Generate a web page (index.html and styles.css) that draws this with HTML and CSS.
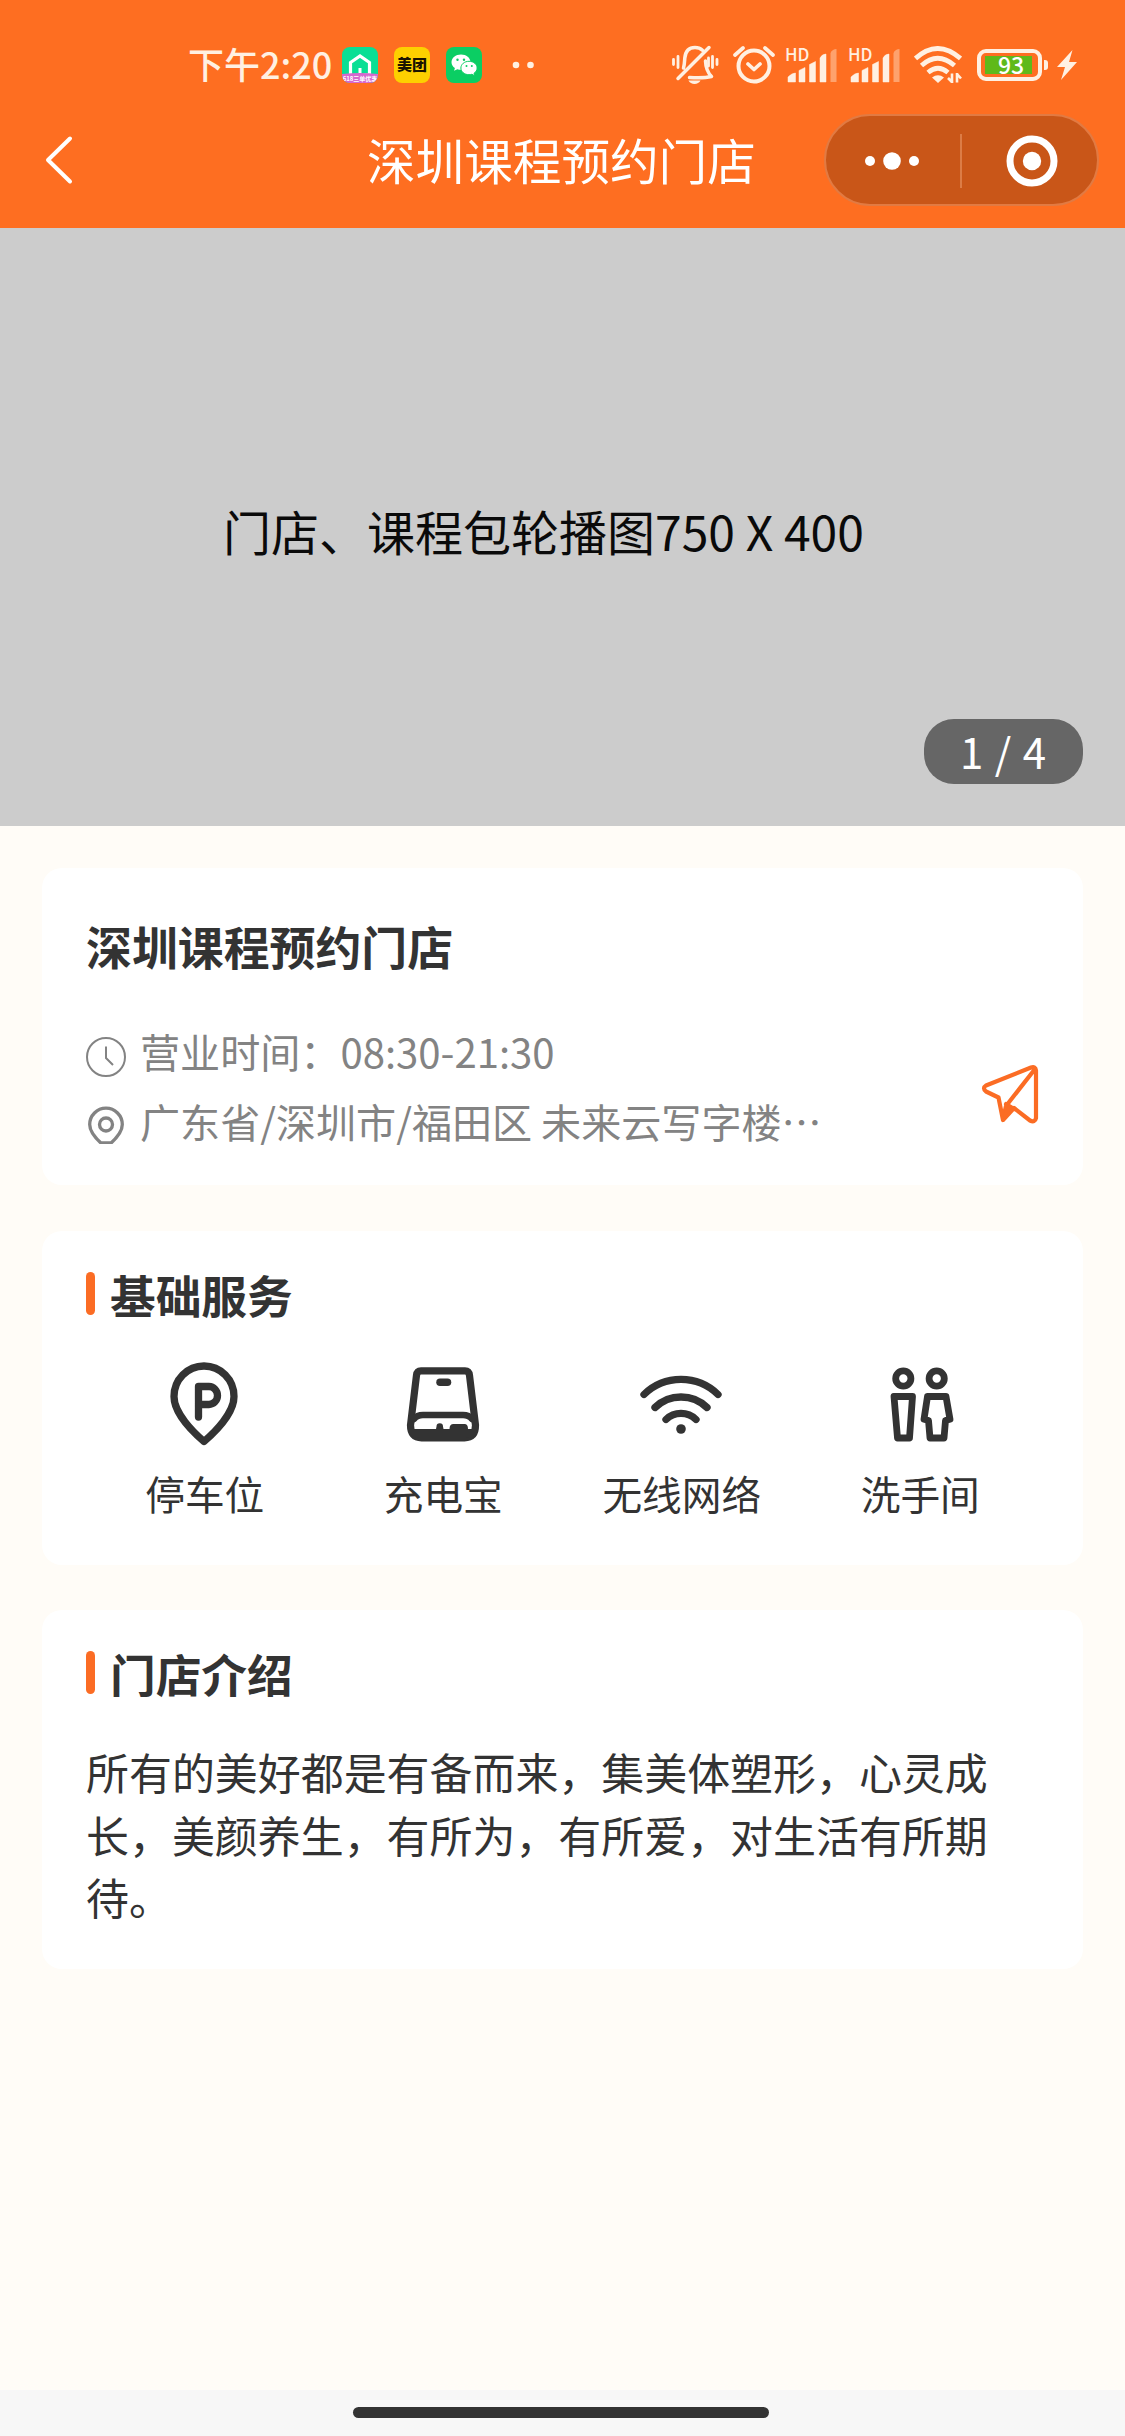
FILE: index.html
```html
<!DOCTYPE html>
<html lang="zh-CN">
<head>
<meta charset="utf-8">
<title>深圳课程预约门店</title>
<link rel="stylesheet" href="styles.css">
</head>
<body>
<div class="page">
  <header class="header">
    <div class="status">
      <div class="status-left">
        <span class="time">下午2:20</span>
        <svg class="app" width="36" height="36" viewBox="0 0 36 36">
          <defs><clipPath id="app-clip"><rect width="36" height="36" rx="8"/></clipPath></defs>
          <g clip-path="url(#app-clip)">
            <rect width="36" height="36" fill="#08df94"/>
            <path d="M8.500 28V15.500L18 9l9.500 6.500V28h-6" fill="none" stroke="#fff" stroke-width="3.200"/>
            <path d="M18 21v6" stroke="#fff" stroke-width="3"/>
            <path d="M0 27q18-2 36 0v9H0z" fill="#d768cf"/>
            <text x="18" y="34" class="app-promo" text-anchor="middle">618三单优惠</text>
          </g>
        </svg>
        <span class="app app-meituan">美团</span>
        <svg class="app" width="36" height="36" viewBox="0 0 36 36">
          <rect width="36" height="36" rx="8" fill="#0bce63"/>
          <path d="M15 7.500c-5.300 0-9.500 3.400-9.500 7.700 0 2.400 1.300 4.500 3.400 5.900l-.8 2.700 3.200-1.500c1.200.4 2.400.5 3.700.5 5.300 0 9.500-3.300 9.500-7.600S20.300 7.500 15 7.500z" fill="#fff"/>
          <path d="M23 14.300c-4.600 0-8.100 3-8.100 6.700s3.500 6.700 8.100 6.700c1 0 2-.2 2.900-.4l2.800 1.500-.7-2.500c1.900-1.200 3.100-3.100 3.100-5.300 0-3.700-3.500-6.700-8.100-6.700z" fill="#fff" stroke="#0bce63"/>
          <g fill="#0bce63"><circle cx="11.500" cy="12.700" r="1.200"/><circle cx="18" cy="12.700" r="1.200"/><circle cx="20.500" cy="19" r="1"/><circle cx="25.800" cy="19" r="1"/></g>
        </svg>
        <svg class="more" width="22" height="8" viewBox="0 0 22 8" fill="#fff0e2"><circle cx="4" cy="4" r="3.300"/><circle cx="18.500" cy="4" r="3.300"/></svg>
      </div>
      <div class="status-right">
        <svg width="48" height="40" viewBox="0 0 48 40" fill="none" stroke="#fff0e2" stroke-linecap="round" stroke-linejoin="round">
          <path d="M2.500 14.500v5M7 11.500v11M41.500 11.500v11M46 14.500v5M37.500 13v8" stroke-width="2.800"/>
          <path d="M12.500 23c1-3 1-6 1.300-10C14.500 6 18 2.500 24 2.500c3 0 5.500 1 7.500 2.800M38 2.500L7 33.500M34.500 16c.3 8 2 11.500 6 15.500-6 1.500-14 1.500-22 1" stroke-width="3.500"/>
          <path d="M17.500 35.500h12c-2 4.500-10 4.500-12 0z" fill="#fff0e2" stroke="none"/>
        </svg>
        <svg class="alarm" width="42" height="40" viewBox="0 0 42 40" fill="none" stroke="#fff0e2" stroke-linecap="round" stroke-linejoin="round">
          <circle cx="21" cy="21" r="15.500" stroke-width="4"/>
          <path d="M2 10l8-7M40 10l-8-7M15 19l6 5.500 6-5.500" stroke-width="3.700"/>
        </svg>
        <svg class="signal" width="52" height="36" viewBox="0 0 52 36" fill="#fff0e2">
          <text x="-1" y="13.500" class="hd">HD</text>
          <path d="M2 35v-5q4-4 7.500-4v9zM13 35V23.500l6-3V35zM23.500 35V17.500l6-3V35zM34 35V11q2-4 6-4v28z" stroke="#fff0e2" stroke-width=".5" stroke-linejoin="round"/>
          <path d="M44.500 35V6q2-4 6-4v33z" opacity=".4"/>
        </svg>
        <svg class="signal" width="52" height="36" viewBox="0 0 52 36" fill="#fff0e2">
          <text x="-1" y="13.500" class="hd">HD</text>
          <path d="M2 35v-5q4-4 7.500-4v9zM13 35V23.500l6-3V35zM23.500 35V17.500l6-3V35zM34 35V11q2-4 6-4v28z" stroke="#fff0e2" stroke-width=".5" stroke-linejoin="round"/>
          <path d="M44.500 35V6q2-4 6-4v33z" opacity=".4"/>
        </svg>
        <svg class="wifi-status" width="48" height="38" viewBox="0 0 48 38" fill="none" stroke="#fff0e2" stroke-width="4.800">
          <path d="M1.500 12.500q22-20 45 0M7.500 19.500q16-14.500 33 0M14 26.500q10-8.500 20 0"/>
          <path d="M18 31.500q6-4.500 12 0l-6 5.500z" fill="#fff0e2" stroke="none"/>
          <path d="M38 37V27.500M38 36l-4-4M43 27v9.500M43 28l4 4.500" stroke-width="2.600"/>
        </svg>
        <div class="battery"><span class="battery-level">93</span></div>
        <svg class="bolt" width="20" height="30" viewBox="0 0 20 30" fill="#fff0e2"><path d="M15.500 0L0 17h8L4 30 20 12h-8z"/></svg>
      </div>
    </div>
    <div class="nav">
      <svg class="back" width="30" height="52" viewBox="0 0 30 52" fill="none" stroke="#fff" stroke-width="4" stroke-linecap="round" stroke-linejoin="round"><path d="M26 4.500L4 26l22 21.500"/></svg>
      <h1 class="nav-title">深圳课程预约门店</h1>
      <div class="capsule">
        <svg class="dots" width="56" height="20" viewBox="0 0 56 20" fill="#fff"><circle cx="6" cy="10" r="5"/><circle cx="28" cy="10" r="8.800"/><circle cx="50" cy="10" r="5"/></svg>
        <span class="capsule-line"></span>
        <svg class="target" width="52" height="52" viewBox="0 0 52 52"><circle cx="26" cy="26" r="22" fill="none" stroke="#fff" stroke-width="7"/><circle cx="26" cy="26" r="9.200" fill="#fff"/></svg>
      </div>
    </div>
  </header>

  <section class="hero">
    <span class="hero-text">门店、课程包轮播图750 X 400</span>
    <span class="counter">1 / 4</span>
  </section>

  <main class="cards">
    <section class="card store">
      <h2 class="store-name">深圳课程预约门店</h2>
      <div class="store-body">
        <div class="store-lines">
          <div class="line">
            <svg width="40" height="42" viewBox="0 0 40 42" fill="none" stroke="#838383" stroke-width="2"><circle cx="20" cy="21" r="19"/><path d="M20 10.500V22l7 7"/></svg>
            <span>营业时间：08:30-21:30</span>
          </div>
          <div class="line">
            <svg class="pin" width="40" height="38" viewBox="0 0 40 38" fill="none" stroke="#838383" stroke-width="3.300"><path d="M16.500 38.500C8 31 3.700 25 3.700 18.500a16.300 16.300 0 0 1 32.600 0C36.300 25 32 31 23.500 38.500M15 37h10"/><circle cx="20" cy="18.500" r="6.500"/></svg>
            <span>广东省/深圳市/福田区 未来云写字楼…</span>
          </div>
        </div>
        <svg class="plane" width="60" height="60" viewBox="0 0 60 60" fill="none" stroke="#fb6c24" stroke-width="4.200" stroke-linejoin="round" stroke-linecap="round">
          <path d="M51 3.500L6 21.500q-4 2.500 0 6l12.500 6L23 56l11-12 16 12.500q5 2.500 6-2.500V6.500Q55.500 2 51 3.500zM55 5L26 42l-3 13M26 40l8 5"/><path d="M26.500 41l6.500 4-9 9z" fill="#fb6c24" stroke-width="2"/>
        </svg>
      </div>
    </section>

    <section class="card services">
      <h2 class="section-title"><span class="mark"></span>基础服务</h2>
      <ul class="service-list">
        <li class="service">
          <svg width="84" height="84" viewBox="0 0 84 84" fill="none" stroke="#333" stroke-width="7.300" stroke-linejoin="round" stroke-linecap="round"><path d="M42 79.500C31 70 12 51 12 34.500a30 30.500 0 0 1 60 0C72 51 53 70 42 79.500z"/><path d="M36.500 55V24.500H47a8.500 9 0 0 1 0 18H36.500"/></svg>
          <span>停车位</span>
        </li>
        <li class="service">
          <svg width="84" height="84" viewBox="0 0 84 84" fill="none" stroke="#333" stroke-width="7.200" stroke-linejoin="round" stroke-linecap="round"><path d="M20 8.800h44q4 0 4.500 4.500l6 50q0 12.500-11 12.500h-43q-11 0-11-12.500l6-50q.5-4.500 4.500-4.500z"/><path d="M39 20.300h7.500" stroke-width="7.500"/><path d="M13 57q3-4 9-4h40q6 0 9 4" stroke-width="6.500"/><path d="M12 67h23l.5-2.500a3.200 3.200 0 0 1 6.500 0l.5 2.500h6q0-5 4-5h11q3.500 0 3.500 5h5v7q-3 2-10 2H22q-7 0-10-2z" fill="#333" stroke="none"/></svg>
          <span>充电宝</span>
        </li>
        <li class="service">
          <svg width="84" height="84" viewBox="0 0 84 84" fill="none" stroke="#333" stroke-width="7.300" stroke-linecap="round"><path d="M5 32.500a53 53 0 0 1 74 0M16 45.500a37.500 37.500 0 0 1 52 0M27 57.500a21.500 21.500 0 0 1 30 0"/><circle cx="42" cy="67" r="4.800" fill="#333" stroke="none"/></svg>
          <span>无线网络</span>
        </li>
        <li class="service">
          <svg width="84" height="84" viewBox="0 0 84 84" fill="none" stroke="#333" stroke-width="6.800" stroke-linejoin="round"><circle cx="25.300" cy="16.500" r="7.600"/><circle cx="58.700" cy="16.500" r="7.600"/><path d="M16 34.500h18.500l-3 41.500H19.500z"/><path d="M49.500 34.500h18.500l4 22.800-4.500 1.200-1.500 17.500H52l-1.500-17.500-4.500-1.200z"/></svg>
          <span>洗手间</span>
        </li>
      </ul>
    </section>

    <section class="card intro">
      <h2 class="section-title"><span class="mark"></span>门店介绍</h2>
      <p class="intro-text">所有的美好都是有备而来，集美体塑形，心灵成长，美颜养生，有所为，有所爱，对生活有所期待。</p>
    </section>
  </main>

  <footer class="home-area"><span class="home-bar"></span></footer>
</div>
</body>
</html>
```
FILE: styles.css
```css
* { box-sizing: border-box; }

body {
  margin: 0;
  background: #fffcf7;
  color: #333;
  font-family: "Noto Sans CJK SC", "Noto Sans", sans-serif;
}

h1, h2, p, ul { margin: 0; padding: 0; }
svg { display: block; flex: none; }

.page {
  width: 1125px;
  height: 2436px;
  display: flex;
  flex-direction: column;
  overflow: hidden;
}

/* Header */
.header {
  height: 228px;
  flex: none;
  background: #fe6e21;
  color: #fff;
}

.status {
  height: 114px;
  padding: 45px 48px 0 188px;
  display: flex;
  justify-content: space-between;
  align-items: flex-start;
  color: #fff0e2;
}

.status-left, .status-right { display: flex; height: 40px; align-items: center; }

.time {
  width: 154px;
  padding-bottom: 4px;
  font-size: 36px;
  font-weight: 500;
  line-height: 36px;
  white-space: nowrap;
}

.app { margin-right: 16px; }
.app-promo { font-size: 6px; font-weight: 700; fill: #fff; }

.app-meituan {
  width: 36px;
  height: 36px;
  border-radius: 8px;
  background: #fdd000;
  color: #1a1300;
  font-size: 15px;
  font-weight: 900;
  line-height: 34px;
  text-align: center;
}

.more { margin-left: 14px; }

.alarm { margin-left: 14px; }
.signal { margin-left: 11px; overflow: visible; }
.hd { font-size: 17px; font-weight: 500; }
.wifi-status { margin-left: 13px; }

.battery {
  position: relative;
  width: 65px;
  height: 32px;
  margin-left: 15px;
  padding: 3px;
  border: 4px solid #fff0e2;
  border-radius: 9px;
}

.battery::after {
  content: "";
  position: absolute;
  top: 7px;
  right: -10px;
  width: 4px;
  height: 10px;
  border-radius: 0 3px 3px 0;
  background: #fff0e2;
}

.battery-level {
  display: block;
  width: 47px;
  height: 18px;
  margin-left: 1px;
  padding-left: 5px;
  background: #5fb91a;
  color: #fff;
  font-size: 23px;
  font-weight: 500;
  line-height: 16px;
  text-align: center;
}

.bolt { margin-left: 15px; }

.nav {
  height: 92px;
  padding: 0 26px 0 44px;
  display: grid;
  grid-template-columns: 323px 1fr 275px;
  align-items: center;
}

.nav-title {
  padding-bottom: 2px;
  font-size: 48.600px;
  font-weight: 400;
  line-height: 60px;
  white-space: nowrap;
}

.capsule {
  height: 92px;
  padding: 2px 0 0 38px;
  display: flex;
  align-items: center;
  border: 2px solid #e27a42;
  border-radius: 46px;
  background: #c95618;
}

.capsule-line { width: 2px; height: 54px; margin: 0 44px 0 40px; background: #dc7c46; }

/* Banner */
.hero {
  height: 598px;
  flex: none;
  display: flex;
  flex-direction: column;
  background: #ccc;
}

.hero-text {
  margin: 266px 0 0 223px;
  color: #0a0a0a;
  font-size: 48px;
  line-height: 72px;
  white-space: nowrap;
}

.counter {
  width: 159px;
  height: 65px;
  margin: 153px 42px 0 auto;
  border-radius: 30px;
  background: #666;
  color: #fff;
  font-size: 42px;
  line-height: 63px;
  letter-spacing: 1px;
  text-align: center;
}

/* Cards */
.cards {
  flex: 1;
  padding: 42px 42px 0;
  display: flex;
  flex-direction: column;
}

.card { padding: 0 43px 0 44px; border-radius: 20px; background: #fff; }

.store { height: 317px; margin-bottom: 46px; padding-top: 47px; }

.store-name { font-size: 45.900px; font-weight: 700; line-height: 60px; }

.store-body {
  margin-top: 41px;
  display: flex;
  align-items: center;
  justify-content: space-between;
}

.line {
  height: 70px;
  display: flex;
  align-items: center;
  gap: 14px;
  color: #838383;
  font-size: 40.100px;
  line-height: 70px;
  white-space: nowrap;
}

.line svg { margin-top: 11px; }
.line .pin { margin-top: 8px; }
.plane { margin-top: 15px; }

.services { height: 334px; margin-bottom: 45px; padding-top: 30px; }

.section-title {
  height: 66px;
  display: flex;
  align-items: center;
  font-size: 45.700px;
  font-weight: 700;
  line-height: 66px;
}

.mark {
  width: 9px;
  height: 43px;
  margin: 0 15px 2px 0;
  border-radius: 5px;
  background: #fb6c24;
}

.service-list {
  margin-top: 35px;
  display: grid;
  grid-template-columns: repeat(4, 1fr);
  list-style: none;
}

.service {
  display: flex;
  flex-direction: column;
  align-items: center;
  font-size: 39.700px;
  line-height: 60px;
}

.service svg { margin-right: 2px; }
.service span { margin: 17px 1px 0 0; }

.intro { height: 359px; padding-top: 30px; }

.intro-text {
  width: 930px;
  margin-top: 34px;
  font-size: 42.950px;
  line-height: 62.500px;
}

/* Home indicator */
.home-area {
  height: 46px;
  flex: none;
  padding-top: 17px;
  background: #f7f7f7;
}

.home-bar {
  display: block;
  width: 416px;
  height: 11px;
  margin: 0 auto 0 353px;
  border-radius: 6px;
  background: #333;
}
```
